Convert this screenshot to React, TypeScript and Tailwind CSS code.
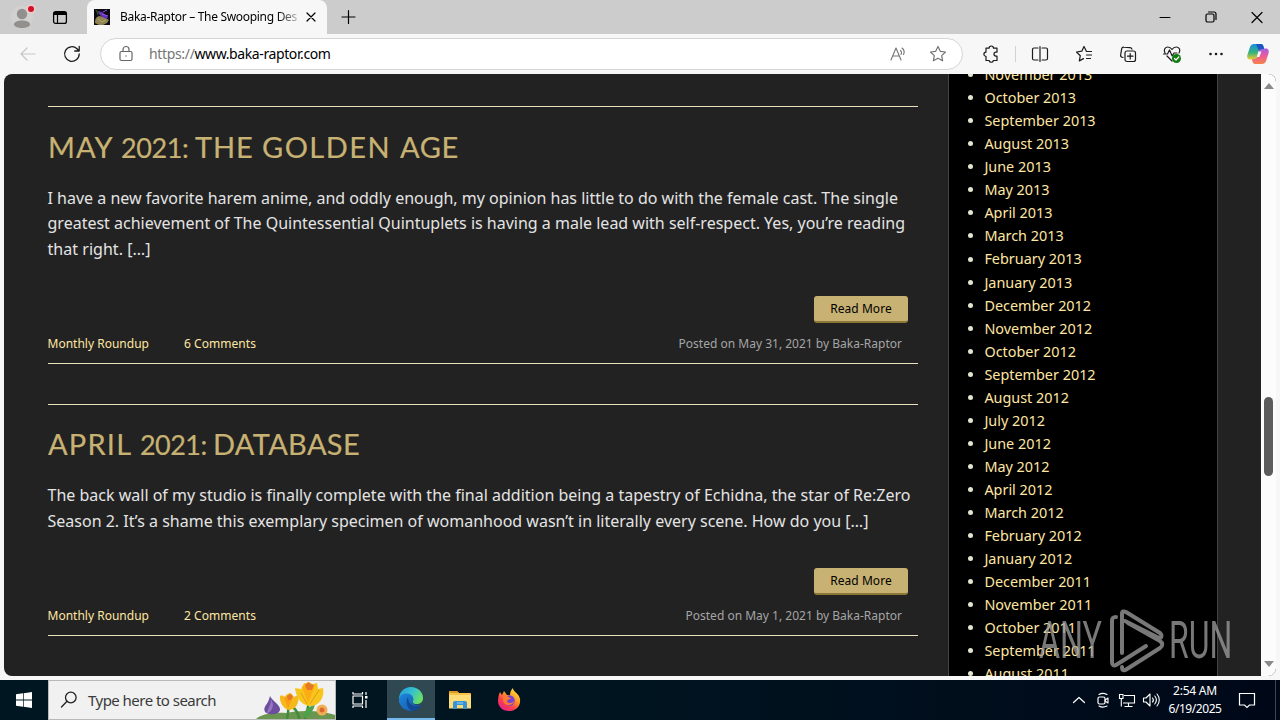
import { useLayoutEffect, useRef } from "react";
import type { ReactNode } from "react";

/** Text whose tracking is adjusted so that it fills a given width. */
function Fit({ w, children, className = "" }: { w: number; children: string; className?: string }) {
  const ref = useRef<HTMLSpanElement>(null);
  useLayoutEffect(() => {
    const el = ref.current;
    if (!el) return;
    el.style.letterSpacing = "0px";
    const natural = el.getBoundingClientRect().width;
    el.style.letterSpacing = `${(w - natural) / children.length}px`;
  }, [w, children]);
  return (
    <span ref={ref} className={`inline-block whitespace-pre ${className}`}>
      {children}
    </span>
  );
}

function Icon({ size = 20, children, className = "" }: { size?: number; children: ReactNode; className?: string }) {
  return (
    <svg
      width={size}
      height={size}
      viewBox={`0 0 ${size} ${size}`}
      fill="none"
      stroke="currentColor"
      strokeWidth="1.2"
      strokeLinecap="round"
      strokeLinejoin="round"
      className={`shrink-0 ${className}`}
    >
      {children}
    </svg>
  );
}

function TabStrip() {
  return (
    <div className="flex h-[34px] items-stretch bg-[#cccccc]">
      <div className="flex w-[87px] items-center">
        <svg width="30" height="30" viewBox="0 0 30 30" className="ml-2 shrink-0">
          <circle cx="14" cy="15" r="11" fill="#d3d1cf" />
          <circle cx="14" cy="12" r="5.2" fill="#92908e" />
          <path d="M6 22.5c0-3 4-4 8-4s8 1 8 4c0 2-4 3.500-8 3.500s-8-1.500-8-3.500z" fill="#92908e" />
          <circle cx="23" cy="7" r="5" fill="#e6cccc" />
          <circle cx="23" cy="7" r="3" fill="#d50f25" />
        </svg>
        <Icon size={16} className="ml-[14px] text-black">
          <rect x="1.600" y="2.600" width="12.800" height="11.800" rx="2" strokeWidth="1.300" />
          <path d="M2 3h12v3H2z" fill="currentColor" stroke="none" />
          <path d="M5.500 5v9" />
        </Icon>
      </div>
      <div className="flex w-[240px] items-center rounded-t-lg bg-[#f7f7f7]">
        <svg width="16" height="16" viewBox="0 0 16 16" className="ml-[7px] shrink-0">
          <rect width="16" height="16" fill="#0d0912" />
          <path d="M1 14c0-4 1-6 4-7l5 1 5 3-2 3-4 2H5z" fill="#8f8352" />
          <path d="M4 2l4 1 6 5-1 2-5-2-3-3z" fill="#6531b8" />
          <path d="M9 3l4-2M8 5l6 2" stroke="#8c55dd" fill="none" />
          <path d="M1 0l4 3-1 4z" fill="#314a20" />
          <path d="M4 10l4 3 4-2" stroke="#b3a56e" fill="none" />
        </svg>
        <div className="ml-[10px] w-[180px] overflow-hidden bg-linear-to-r from-black from-85% to-[#d8d8d8] bg-clip-text text-[12px] text-transparent">
          <Fit w={177}>Baka-Raptor – The Swooping Des</Fit>
        </div>
        <Icon size={12} className="ml-[5px] text-black">
          <path d="M2 2l8 8M10 2l-8 8" />
        </Icon>
      </div>
      <Icon size={16} className="ml-[13px] mt-[9px] text-black">
        <path d="M8.500 1.500v13M2 8h13" />
      </Icon>
      <div className="ml-auto mr-[16px] flex items-center gap-[32px] text-black">
        <Icon size={14}>
          <path d="M2 7.500h10" strokeWidth="1" />
        </Icon>
        <Icon size={14}>
          <rect x="2" y="4" width="8" height="8" rx="1.500" />
          <path d="M4.500 2H10a2 2 0 0 1 2 2v5.500" />
        </Icon>
        <Icon size={14}>
          <path d="M2 2.500l10 10M12 2.500l-10 10" />
        </Icon>
      </div>
    </div>
  );
}

function Toolbar() {
  return (
    <div className="flex h-10 items-center bg-[#f7f7f7] text-[#1b1b1b]">
      <Icon className="ml-[18px] text-[#c6c6c6]">
        <path d="M17 10H3M9 4l-6 6 6 6" />
      </Icon>
      <Icon className="ml-[24px]">
        <path d="M17.200 10a7.300 7.300 0 1 1-2.200-5.200L17 7M17.200 2.500V7h-4.500" strokeWidth="1.300" />
      </Icon>
      <div className="ml-[18px] flex h-8 w-[863px] items-center rounded-full border border-[#d5d5d5] bg-white">
        <Icon size={18} className="ml-4 text-[#666]">
          <rect x="3" y="6.500" width="12" height="9" rx="1.500" />
          <path d="M6 6V4.500a3 3 0 0 1 6 0V6" />
          <circle cx="9" cy="11" r=".7" fill="currentColor" stroke="none" />
        </Icon>
        <div className="ml-[14px] text-[14px] leading-5 text-[#767676]">
          <Fit w={45.500}>https://</Fit>
          <Fit w={136} className="text-black">www.baka-raptor.com</Fit>
        </div>
        <Icon size={18} className="ml-auto text-[#757575]">
          <path d="M2 15L7 3l5 12M3.700 11h6.600M11.500 5.500c1.200 1 1.200 3 .5 4M13 3c2.500 2 2.500 4.500 1.500 6.500" strokeWidth="1.100" />
        </Icon>
        <Icon size={18} className="ml-[22px] mr-[15px] text-[#757575]">
          <path d="M9 1.500l2.300 4.800 5.200.7-3.800 3.600.9 5.200L9 13.300l-4.600 2.500.9-5.200L1.500 7l5.200-.7z" />
        </Icon>
      </div>
      <Icon className="ml-[18px]">
        <path d="M5 4.200h3.100a2.200 2.200 0 0 1 4.400 0H16v3.900h-1a2 2 0 0 0 0 4h1v4.400h-3.600a2.200 2.200 0 0 1-4.300 0H5v-4.200a2.100 2.100 0 0 1 0-4.200z" />
      </Icon>
      <div className="ml-[14px] h-4 w-px bg-[#d2d2d2]" />
      <Icon className="ml-[14px]">
        <path d="M8 4H4a1.500 1.500 0 0 0-1.500 1.500v9A1.500 1.500 0 0 0 4 16h4M12 4h4a1.500 1.500 0 0 1 1.500 1.500v9A1.500 1.500 0 0 1 16 16h-4M10 2.500v15" />
      </Icon>
      <Icon className="ml-[24px]">
        <path d="M17.500 7.500h-5L10 2.500 7.800 7.200 2.500 8l3.800 3.700-1 5.200 4.200-2.300M12.500 11h5M12.500 14.500h4" />
      </Icon>
      <Icon className="ml-[24px]">
        <rect x="7" y="7" width="10.500" height="10.500" rx="2" />
        <path d="M12.200 9.500v5.500M9.500 12.200H15M5 13.500l-1-.3a2 2 0 0 1-1.300-2.500l1-6a2 2 0 0 1 2.200-1.500l6 .4a2 2 0 0 1 2 1.500" />
      </Icon>
      <Icon className="ml-[24px]">
        <path d="M3 9c-1.500-3-.2-5.800 2.500-6 2-.1 3.500 1 4.500 2.500C11 4 12.500 2.900 14.500 3c3 .2 4.200 3.200 2.500 6M1.500 10h4l2-4 2.700 6L12 9h3M5 12l5 5" />
        <circle cx="14.500" cy="14.500" r="4.500" fill="#107c10" stroke="none" />
        <path d="M12.500 14.500l1.500 1.500 2.800-3" stroke="white" />
      </Icon>
      <Icon className="ml-[24px]">
        <g fill="currentColor" stroke="none">
          <circle cx="4.500" cy="10" r="1.300" />
          <circle cx="10" cy="10" r="1.300" />
          <circle cx="15.500" cy="10" r="1.300" />
        </g>
      </Icon>
      <svg width="24" height="24" viewBox="0 0 24 24" className="ml-[20px] shrink-0">
        <defs>
          <linearGradient id="cpa" x1="0" y1="0" x2="0" y2="1">
            <stop offset="0" stopColor="#1b8fe0" />
            <stop offset=".55" stopColor="#35b27d" />
            <stop offset="1" stopColor="#f0cf2a" />
          </linearGradient>
          <linearGradient id="cpb" x1="0" y1="0" x2="0" y2="1">
            <stop offset="0" stopColor="#a45ee8" />
            <stop offset=".5" stopColor="#ed5d92" />
            <stop offset="1" stopColor="#f6834a" />
          </linearGradient>
        </defs>
        <path d="M8 2h7c1.500 0 2 1 2.500 2.500L18 7h-2c-2 0-3 1-3.500 3L11 15c-.5 2-1.500 2.500-3 2.500H4C1.500 17.500.7 15 1.500 12.500L4 5c.7-2 2-3 4-3z" fill="url(#cpa)" />
        <path d="M16 22H9c-1.500 0-2-1-2.500-2.500L6 17h2c2 0 3-1 3.500-3L13 9c.5-2 1.500-2.500 3-2.500h4c2.500 0 3.300 2.500 2.500 5L20 19c-.7 2-2 3-4 3z" fill="url(#cpb)" />
        <path d="M10 2h5c1.500 0 2 1 2.500 2.500L18 7h-2c-1.500 0-2.500.7-3 2z" fill="#1b55c4" />
        <path d="M12.400 9.500h3l-2 5.500h-2.600z" fill="#f7f7f7" />
      </svg>
    </div>
  );
}

type Word = [text: string, width: number];

function Article({ title, lines, comments, posted, postedWidth }: {
  title: Word[];
  lines: Word[];
  comments: string;
  posted: string;
  postedWidth: number;
}) {
  return (
    <article className="mb-10 flex flex-col border-y border-[#eae0bd]">
      <h2 className="mt-[19.600px] flex h-[40px] items-baseline font-['Lato'] text-[29px] leading-10 text-[#c8b273] [-webkit-text-stroke:0.2px_#c8b273]">
        {title.map(([t, w]) => (
          <Fit key={t} w={w} className={t.startsWith("2") ? "text-[27px]" : ""}>{t}</Fit>
        ))}
      </h2>
      <p className="-ml-[0.500px] mt-[19.100px] text-[16px] leading-[25.600px] text-[#e4e4e4]">
        {lines.map(([t, w]) => (
          <Fit key={t} w={w} className="align-top">{t}</Fit>
        ))}
      </p>
      <div className="mr-[10px] mt-[33.300px] flex h-[27px] w-[94px] items-center justify-center self-end rounded-[3px] border-b-2 border-[#8b7838] bg-[#c8b273] pt-[2px] text-[12px] text-black">
        <Fit w={61.500}>Read More</Fit>
      </div>
      <div className="mb-[9px] mt-[12px] flex h-[19px] items-center text-[12px] text-[#ffe6a3]">
        <Fit w={101.500} className="-ml-[0.500px]">Monthly Roundup</Fit>
        <span className="ml-[35px]"><Fit w={72}>{comments}</Fit></span>
        <span className="ml-auto mr-[16px] text-[#a5a5a5]"><Fit w={postedWidth}>{posted}</Fit></span>
      </div>
    </article>
  );
}

const months = [
  "November 2013", "October 2013", "September 2013", "August 2013", "June 2013", "May 2013", "April 2013",
  "March 2013", "February 2013", "January 2013", "December 2012", "November 2012", "October 2012",
  "September 2012", "August 2012", "July 2012", "June 2012", "May 2012", "April 2012", "March 2012",
  "February 2012", "January 2012", "December 2011", "November 2011", "October 2011", "September 2011",
  "August 2011",
];

function Watermark() {
  return (
    <div className="absolute left-[1035px] top-[534px] flex h-[66px] w-[194px] items-center font-['Roboto'] text-[52px] leading-none text-[#a0a0a0] opacity-75">
      <span className="w-[62px]"><span className="block origin-left scale-x-[0.620]">ANY</span></span>
      <svg width="60" height="66" viewBox="0 0 60 66" className="ml-[7px] shrink-0" fill="none" stroke="currentColor" strokeWidth="4" strokeLinejoin="round" strokeLinecap="round">
        <path d="M14 45V6c0-3 2-3 4-2l34 21c2 2 2 5-1 5L17 13" />
        <path d="M8 9c-3 0-4 1-4 4v41c0 3 2 4 4 3l30-19" />
        <path d="M14 59c0 4 2 4 5 2l33-21c3-2 3-5 0-7L20 15" />
      </svg>
      <span className="ml-px w-[62px]"><span className="block origin-left scale-x-[0.615]">RUN</span></span>
    </div>
  );
}

function WebPage() {
  return (
    <div className="relative ml-1 flex h-[602px] w-[1272px] overflow-hidden rounded-lg bg-[#222222]">
      <main className="ml-[44px] mt-8 w-[870px] shrink-0">
        <Article
          title={[["MAY ", 73], ["2021: ", 74], ["THE ", 67], ["GOLDEN ", 138], ["AGE", 59]]}
          lines={[
            ["I have a new favorite harem anime, and oddly enough, my opinion has little to do with the female cast. The single", 850.500],
            ["greatest achievement of The Quintessential Quintuplets is having a male lead with self-respect. Yes, you’re reading", 857.500],
            ["that right. […]", 103],
          ]}
          comments="6 Comments"
          posted="Posted on May 31, 2021 by Baka-Raptor"
          postedWidth={223.500}
        />
        <Article
          title={[["APRIL ", 92], ["2021: ", 73], ["DATABASE", 147]]}
          lines={[
            ["The back wall of my studio is finally complete with the final addition being a tapestry of Echidna, the star of Re:Zero", 863],
            ["Season 2. It’s a shame this exemplary specimen of womanhood wasn’t in literally every scene. How do you […]", 821],
          ]}
          comments="2 Comments"
          posted="Posted on May 1, 2021 by Baka-Raptor"
          postedWidth={216.500}
        />
      </main>
      <aside className="ml-[30px] h-[602px] w-[270px] shrink-0 overflow-hidden border-x border-[#444] bg-black">
        <ul className="-mt-[10.780px] ml-[18px] text-[14.400px] leading-[23.040px] text-[#ffe6a3]">
          {months.map((m) => (
            <li key={m} className="flex h-[23.040px] items-center">
              <span className="mr-[12.400px] size-[5px] translate-x-px rounded-full bg-[#e4e4d0]" />
              {m}
            </li>
          ))}
        </ul>
      </aside>
      <div className="ml-auto flex w-[15px] flex-col items-center bg-[#fcfcfc]">
        <svg width="10" height="6" viewBox="0 0 10 6" className="mt-[9px]"><path d="M0 6l5-6 5 6z" fill="#8a8a8a" /></svg>
        <div className="mt-[308px] h-[79px] w-[9px] rounded-full bg-[#5c5c5c]" />
        <svg width="10" height="6" viewBox="0 0 10 6" className="mb-[9px] mt-auto"><path d="M0 0l5 6 5-6z" fill="#8a8a8a" /></svg>
      </div>
      <Watermark />
    </div>
  );
}

function Flowers() {
  return (
    <svg width="82" height="38" viewBox="0 0 82 38" className="ml-auto shrink-0 self-end">
      <path d="M3 38c5-5 18-7 30-6 12-3 35-3 49 2v4z" fill="#6a9650" />
      <path d="M34 38c1-6 2-10 1-14M52 38c2-8 4-14 4-20M46 38c0-5-3-9-6-12" stroke="#3f8d3b" strokeWidth="2.500" fill="none" />
      <path d="M50 36c1-7 6-11 12-12-2 6-5 10-9 13z" fill="#4fa04a" />
      <path d="M17 15c2 5 11 9 10 14-1 4-7 5-11 4-5-1-6-5-3-9 2-3 3-5 4-9z" fill="#6d4e9e" />
      <path d="M18 18c0 6-3 9-4 14 3 0 6-4 6-9z" fill="#9674c0" />
      <path d="M27 15c2-1 4 0 5 1 1-3 4-4 6-4l3 4 4-2c2 5-1 14-8 15-6 0-11-8-10-14z" fill="#f5b91c" />
      <path d="M31 17l4 10 5-11-3-3z" fill="#fb9d15" />
      <path d="M34 15l3-2 3 2-2 4h-3z" fill="#e77924" />
      <path d="M42 7l6 1 3-6c4 0 6 2 7 4 1-3 4-4 6-4l1 6 5-1c2 9-4 18-12 18-9 0-15-8-16-18z" fill="#f8c51c" />
      <path d="M49 6l6 16 7-17-6-4z" fill="#fbad13" />
      <path d="M52 4l3-3 3 2 3 1-2 5h-5z" fill="#e77924" />
      <path d="M48 12l6 11M66 9l-9 14" stroke="#e59c15" fill="none" />
      <circle cx="69" cy="29" r="5.500" fill="#f2ae57" />
      <circle cx="69" cy="29" r="2.500" fill="#d9682e" />
    </svg>
  );
}

function EdgeLogo() {
  return (
    <svg width="26" height="26" viewBox="0 0 26 26">
      <defs>
        <linearGradient id="eg" x1="0" y1="0" x2="1" y2=".5">
          <stop offset="0" stopColor="#2297dc" />
          <stop offset=".55" stopColor="#35c1cf" />
          <stop offset="1" stopColor="#6bdf64" />
        </linearGradient>
        <linearGradient id="eb" x1="0" y1="0" x2="1" y2="1">
          <stop offset="0" stopColor="#1c86dc" />
          <stop offset="1" stopColor="#1457a8" />
        </linearGradient>
      </defs>
      <path d="M1 13C1 6 6 1 13 1s12 5 12 11c0 4-3 6-6.500 6-3 0-4.500-1.500-3.500-3 1-2 0-5-4-5-5 0-9 4-8.500 9A13 13 0 0 1 1 13z" fill="url(#eg)" />
      <path d="M1 13c1-4 4-5.500 8-5.500 5 0 7 4 6 7-1 4 3 6 8 4-2 4-6 6.500-10 6.500C6 25 1 20 1 13z" fill="url(#eb)" />
      <path d="M10 11c-3 5-1 11 4 14 4-.2 7-2.500 9-6-6 3-13 0-13-8z" fill="#134a93" />
    </svg>
  );
}

function FirefoxLogo() {
  return (
    <svg width="24" height="24" viewBox="0 0 24 24">
      <defs>
        <linearGradient id="ff" x1=".9" y1="0" x2=".2" y2="1">
          <stop offset="0" stopColor="#fff04a" />
          <stop offset=".4" stopColor="#ff9a22" />
          <stop offset=".7" stopColor="#fa3c50" />
          <stop offset="1" stopColor="#e5218a" />
        </linearGradient>
      </defs>
      <path d="M3 4l2 3 2-4 3 4 3 0c0-3 1-5 3-7 0 4 6 5 7 11 1 8-5 12-11 12C5 23 1 18 1 13c0-4 1-7 2-9z" fill="url(#ff)" />
      <circle cx="12.500" cy="12.500" r="5.200" fill="#7542d5" />
      <path d="M6 8c2-1 4 0 6 1l2 2c-2 0-4 1-4 3 2 2 5 1 7-1-1 5-9 6-11 0z" fill="#fb7a2d" />
    </svg>
  );
}

function Taskbar() {
  return (
    <div className="flex h-10 items-stretch bg-linear-to-r from-[#001721] via-[#001420] to-[#000818] text-white">
      <div className="flex w-12 items-center justify-center">
        <svg width="16" height="16" viewBox="0 0 16 16" fill="white">
          <path d="M0 2.300l7-1V7.600H0zM7.700 1.200L16 0v7.600H7.700zM0 8.400h7v6.300l-7-1zM7.700 8.400H16V16l-8.300-1.200z" />
        </svg>
      </div>
      <div className="flex w-[288px] items-center border border-[#b9b9b9] bg-[#f1f1f1] text-[#3a3a3a]">
        <Icon size={18} className="ml-[11px] text-[#222]">
          <circle cx="10.800" cy="6.500" r="5.300" strokeWidth="1.300" />
          <path d="M7 10.300L1.500 16" strokeWidth="1.300" />
        </Icon>
        <div className="ml-[10px] text-[15px]"><Fit w={128}>Type here to search</Fit></div>
        <Flowers />
      </div>
      <div className="flex w-[51px] items-center justify-center">
        <Icon size={18} className="-ml-[3px]">
          <g strokeLinecap="butt" strokeWidth="1.200">
            <path d="M2 5h9.500v8H2zM2 1v2h9.500V1M2 17v-2h9.500v2M15 1v3M15 9v8" />
            <path d="M14 5h2.500v2.500H14z" fill="white" stroke="none" />
          </g>
        </Icon>
      </div>
      <div className="flex w-12 items-center justify-center border-b-2 border-[#76b9ed] bg-[#304852]">
        <EdgeLogo />
      </div>
      <div className="flex w-[49px] items-center justify-center">
        <svg width="22" height="20" viewBox="0 0 22 20">
          <path d="M0 2c0-.6.400-1 1-1h7l2 2h11c.6 0 1 .4 1 1v14H0z" fill="#f6c344" />
          <path d="M0 5h22v13.500H0z" fill="#fbdc78" />
          <path d="M1 1h7l2 2H0z" fill="#dc9a24" />
          <path d="M4 19v-6c0-1 .6-2 2-2h10c1.400 0 2 1 2 2v6h-4v-4H8v4z" fill="#3c93d4" />
          <path d="M8 12h6v2H8z" fill="#64b5e5" />
        </svg>
      </div>
      <div className="flex w-[49px] items-center justify-center">
        <FirefoxLogo />
      </div>
      <div className="ml-auto flex items-center">
        <Icon size={14} className="mr-[9px]"><path d="M1.500 9.500L7 4.500l5.500 5" /></Icon>
        <Icon size={16} className="mr-[7px]">
          <rect x="3" y="5" width="7" height="7" rx="1.500" />
          <path d="M10 8l3-2v5l-3-2M4 2.500c2.500-1.500 5-1.500 8 0M4 14c2.500 1.500 5 1.500 8 0" strokeWidth="1.100" />
        </Icon>
        <Icon size={18} className="mr-[6px]">
          <g strokeLinecap="butt" strokeLinejoin="miter" strokeWidth="1.100">
            <path d="M6 4.500h10.500v7.500H5M10.500 12v3M6.500 15.500h8M1.500 3.500H5v4H1.500zM3.300 7.500v8" />
          </g>
        </Icon>
        <Icon size={18} className="mr-[8px]">
          <path d="M1.500 7h2.500l4-4v12l-4-4H1.500zM10.500 7c1 1.200 1 3 0 4M12.800 5c2 2.500 2 5.500 0 8M15 3c3 3.500 3 8.500 0 12" strokeWidth="1.100" />
        </Icon>
        <div className="flex w-[54px] flex-col items-center text-[12px] leading-[18px]">
          <Fit w={44}>2:54 AM</Fit>
          <Fit w={53}>6/19/2025</Fit>
        </div>
        <Icon size={18} className="ml-[16px] mr-[19px]">
          <path d="M1.500 2.500h15v11.500h-5L9 16.500 6.500 14h-5z" strokeLinejoin="miter" />
        </Icon>
        <div className="mr-[4px] h-10 w-px bg-[#3a4650]" />
      </div>
    </div>
  );
}

export default function App() {
  return (
    <div className="flex h-[720px] w-[1280px] flex-col overflow-hidden bg-[#f7f7f7] font-['Noto_Sans',sans-serif]">
      <TabStrip />
      <Toolbar />
      <WebPage />
      <div className="h-1 shrink-0" />
      <Taskbar />
    </div>
  );
}
